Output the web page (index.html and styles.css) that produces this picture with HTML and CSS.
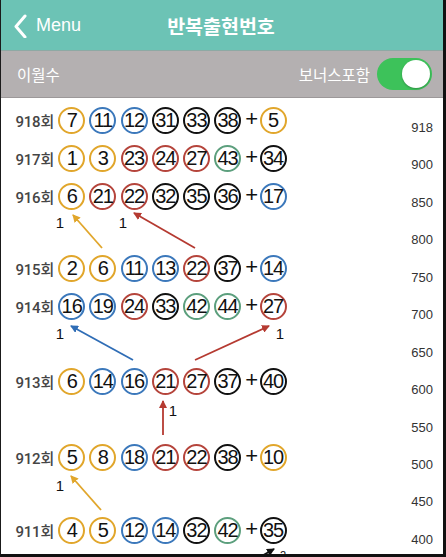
FILE: index.html
```html
<!DOCTYPE html>
<html lang="ko">
<head>
<meta charset="utf-8">
<title>반복출현번호</title>
<link rel="stylesheet" href="styles.css">
</head>
<body>
<div class="app">
  <header class="navbar">
    <div class="back">
      <svg class="chev" width="14" height="24" viewBox="0 0 14 24"><polyline points="11,2 2,12.5 11,23" fill="none" stroke="#fff" stroke-width="3" stroke-linecap="round" stroke-linejoin="round"/></svg>
      <span>Menu</span>
    </div>
    <h1 class="title">반복출현번호</h1>
  </header>
  <div class="toolbar">
    <span>이월수</span>
    <div class="bonus">
      <span>보너스포함</span>
      <div class="toggle"><div class="knob"></div></div>
    </div>
  </div>
  <main class="content">
    <div class="list">
      <div class="row"><span class="lbl">918회</span><span class="ball y">7</span><span class="ball b">11</span><span class="ball b">12</span><span class="ball k">31</span><span class="ball k">33</span><span class="ball k">38</span><span class="plus">+</span><span class="ball y">5</span></div>
      <div class="row"><span class="lbl">917회</span><span class="ball y">1</span><span class="ball y">3</span><span class="ball r">23</span><span class="ball r">24</span><span class="ball r">27</span><span class="ball g">43</span><span class="plus">+</span><span class="ball k">34</span></div>
      <div class="row"><span class="lbl">916회</span><span class="ball y">6</span><span class="ball r">21</span><span class="ball r">22</span><span class="ball k">32</span><span class="ball k">35</span><span class="ball k">36</span><span class="plus">+</span><span class="ball b">17</span></div>
      <div class="gap g34"></div>
      <div class="row"><span class="lbl">915회</span><span class="ball y">2</span><span class="ball y">6</span><span class="ball b">11</span><span class="ball b">13</span><span class="ball r">22</span><span class="ball k">37</span><span class="plus">+</span><span class="ball b">14</span></div>
      <div class="row"><span class="lbl">914회</span><span class="ball b">16</span><span class="ball b">19</span><span class="ball r">24</span><span class="ball k">33</span><span class="ball g">42</span><span class="ball g">44</span><span class="plus">+</span><span class="ball r">27</span></div>
      <div class="gap g37"></div>
      <div class="row"><span class="lbl">913회</span><span class="ball y">6</span><span class="ball b">14</span><span class="ball b">16</span><span class="ball r">21</span><span class="ball r">27</span><span class="ball k">37</span><span class="plus">+</span><span class="ball k">40</span></div>
      <div class="gap g38"></div>
      <div class="row"><span class="lbl">912회</span><span class="ball y">5</span><span class="ball y">8</span><span class="ball b">18</span><span class="ball r">21</span><span class="ball r">22</span><span class="ball k">38</span><span class="plus">+</span><span class="ball y">10</span></div>
      <div class="gap g35"></div>
      <div class="row"><span class="lbl">911회</span><span class="ball y">4</span><span class="ball y">5</span><span class="ball b">12</span><span class="ball b">14</span><span class="ball k">32</span><span class="ball g">42</span><span class="plus">+</span><span class="ball k">35</span></div>
    </div>
    <div class="index">
      <span>918</span><span>900</span><span>850</span><span>800</span><span>750</span><span>700</span><span>650</span><span>600</span><span>550</span><span>500</span><span>450</span><span>400</span>
    </div>
    <svg class="arrows" width="442" height="456" viewBox="1 98 442 456">
      <defs>
        <marker id="ay" markerWidth="8" markerHeight="8" refX="7" refY="4" orient="auto" markerUnits="userSpaceOnUse"><path d="M0,0 L8,4 L0,8 Z" fill="#e1a62b"/></marker>
        <marker id="ar" markerWidth="8" markerHeight="8" refX="7" refY="4" orient="auto" markerUnits="userSpaceOnUse"><path d="M0,0 L8,4 L0,8 Z" fill="#b53a31"/></marker>
        <marker id="ab" markerWidth="8" markerHeight="8" refX="7" refY="4" orient="auto" markerUnits="userSpaceOnUse"><path d="M0,0 L8,4 L0,8 Z" fill="#2f6db6"/></marker>
        <marker id="ak" markerWidth="8" markerHeight="8" refX="7" refY="4" orient="auto" markerUnits="userSpaceOnUse"><path d="M0,0 L8,4 L0,8 Z" fill="#111"/></marker>
      </defs>
      <line x1="102" y1="248" x2="73" y2="215" stroke="#e1a62b" stroke-width="1.8" marker-end="url(#ay)"/>
      <line x1="195" y1="248" x2="134" y2="213" stroke="#b53a31" stroke-width="1.8" marker-end="url(#ar)"/>
      <line x1="133" y1="360" x2="71" y2="326" stroke="#2f6db6" stroke-width="1.8" marker-end="url(#ab)"/>
      <line x1="195" y1="360" x2="269" y2="326" stroke="#b53a31" stroke-width="1.8" marker-end="url(#ar)"/>
      <line x1="163" y1="435" x2="163" y2="401" stroke="#b53a31" stroke-width="1.8" marker-end="url(#ar)"/>
      <line x1="101" y1="510" x2="71" y2="476" stroke="#e1a62b" stroke-width="1.8" marker-end="url(#ay)"/>
      <line x1="260" y1="557" x2="274" y2="549" stroke="#111" stroke-width="1.8" marker-end="url(#ak)"/>
      <g class="cnt">
        <text x="60" y="228">1</text>
        <text x="123" y="228">1</text>
        <text x="60" y="339">1</text>
        <text x="280" y="339">1</text>
        <text x="173" y="416">1</text>
        <text x="60" y="491">1</text>
        <text x="283" y="559" class="small">2</text>
      </g>
    </svg>
  </main>
</div>
</body>
</html>
```
FILE: styles.css
```css
html, body {
  margin: 0;
  padding: 0;
  background: #fff;
}
.app {
  width: 446px;
  height: 557px;
  box-sizing: border-box;
  border-left: 1px solid #1a1a1a;
  border-right: 3px solid #111;
  border-bottom: 3px solid #111;
  display: flex;
  flex-direction: column;
  overflow: hidden;
  font-family: "Liberation Sans", "Noto Sans CJK KR", sans-serif;
}
.navbar {
  height: 51px;
  flex: none;
  background: #6cc3b5;
  border-bottom: 1px solid #8ea9a4;
  box-sizing: border-box;
  display: flex;
  align-items: center;
  position: relative;
  color: #fff;
}
.back {
  display: flex;
  align-items: center;
  padding-left: 13px;
  gap: 8px;
  font-size: 18px;
  padding-top: 1px;
}
.chev { display: block; }
.title {
  position: absolute;
  left: 0;
  right: 0;
  top: 0;
  bottom: 0;
  margin: 0;
  display: flex;
  align-items: center;
  justify-content: center;
  font-family: "Noto Sans CJK KR", sans-serif;
  font-size: 19.5px;
  font-weight: 700;
  padding-right: 2px;
  pointer-events: none;
}
.toolbar {
  height: 47px;
  flex: none;
  box-sizing: border-box;
  background: #b4b0b1;
  border-bottom: 1px solid #9c9899;
  display: flex;
  align-items: center;
  justify-content: space-between;
  padding: 0 11px 0 16px;
  color: #fff;
  font-family: "Noto Sans CJK KR", sans-serif;
  font-size: 15.5px;
}
.bonus {
  display: flex;
  align-items: center;
  gap: 7px;
}
.toggle {
  width: 55px;
  height: 32px;
  border-radius: 16px;
  background: #3dc25a;
  box-sizing: border-box;
  padding: 2px;
  display: flex;
  justify-content: flex-end;
}
.knob {
  width: 28px;
  height: 28px;
  border-radius: 50%;
  background: #fff;
  box-shadow: 0 1px 2px rgba(0,0,0,0.25);
}
.content {
  flex: 1;
  position: relative;
  display: grid;
  grid-template-columns: 1fr 52px;
  overflow: hidden;
}
.list {
  padding-top: 3px;
}
.row {
  height: 38px;
  display: flex;
  align-items: center;
  gap: 4.2px;
}
.gap { flex: none; }
.g34 { height: 34px; }
.g35 { height: 35px; }
.g37 { height: 37px; }
.g38 { height: 38px; }
.lbl {
  width: 53px;
  text-align: right;
  font-family: "Roboto", "Noto Sans CJK KR", sans-serif;
  font-size: 15px;
  font-weight: 500;
  color: #454545;
  letter-spacing: -0.2px;
}
.ball {
  width: 27px;
  height: 27px;
  box-sizing: border-box;
  border-radius: 50%;
  border: 2px solid #222;
  display: flex;
  align-items: center;
  justify-content: center;
  font-size: 20px;
  color: #111;
  letter-spacing: -1px;
  flex: none;
}
.ball.y { border-color: #e1a62b; }
.ball.b { border-color: #3b78bb; }
.ball.r { border-color: #b5443b; }
.ball.k { border-color: #111; }
.ball.g { border-color: #5c9f7d; }
.plus {
  width: 10px;
  text-align: center;
  font-size: 22px;
  color: #111;
  line-height: 1;
  margin-top: -2px;
}
.index {
  display: flex;
  flex-direction: column;
  align-items: flex-end;
  padding: 11px 10px 0 0;
  font-size: 13px;
  color: #333;
}
.index span {
  height: 37.45px;
  line-height: 37.45px;
  flex: none;
}
.arrows {
  position: absolute;
  left: 0;
  top: 0;
  pointer-events: none;
}
.cnt text {
  font-family: "Liberation Sans", sans-serif;
  font-size: 15px;
  fill: #111;
  text-anchor: middle;
}
.cnt text.small { font-size: 11px; }
```
